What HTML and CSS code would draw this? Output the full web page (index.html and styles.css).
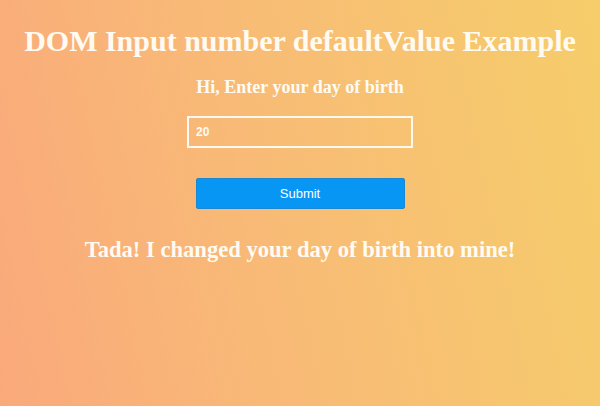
FILE: index.html
```html
<!DOCTYPE html>
<html>
<head>
<meta charset="utf-8">
<link rel="stylesheet" href="styles.css">
</head>
<body>
<main class="page">
  <h1 class="title">DOM Input number defaultValue Example</h1>
  <h3 class="subtitle">Hi, Enter your day of birth</h3>
  <input class="field" type="text" value="20">
  <button class="submit">Submit</button>
  <h2 class="result">Tada! I changed your day of birth into mine!</h2>
</main>
</body>
</html>
```
FILE: styles.css
```css
html, body {
  margin: 0;
  padding: 0;
  height: 100%;
}
body {
  background: linear-gradient(78deg, #faa97b 0%, #f8bb76 45%, #f6cd6a 100%);
  font-family: "Liberation Serif", "Times New Roman", serif;
  color: #fffbf2;
}
.page {
  display: flex;
  flex-direction: column;
  align-items: center;
  padding-top: 22px;
}
.title {
  margin: 0;
  font-size: 30px;
  line-height: 37px;
  font-weight: bold;
}
.subtitle {
  margin: 18px 0 0;
  font-size: 18px;
  line-height: 20px;
  font-weight: bold;
}
.field {
  margin-top: 19px;
  box-sizing: border-box;
  width: 226px;
  height: 32px;
  border: 2px solid #fffaf0;
  background: transparent;
  color: #fffbf2;
  font-family: "Liberation Sans", Arial, sans-serif;
  font-weight: bold;
  font-size: 12px;
  padding: 0 7px;
  outline: none;
}
.submit {
  margin-top: 30px;
  box-sizing: border-box;
  width: 209px;
  height: 31px;
  background: #0896f4;
  border: 1px solid #1b88d4;
  border-radius: 2px;
  color: #fff;
  font-family: "Liberation Sans", Arial, sans-serif;
  font-size: 13px;
}
.result {
  margin: 28px 0 0;
  font-size: 22.6px;
  line-height: 26px;
  font-weight: bold;
}
```
